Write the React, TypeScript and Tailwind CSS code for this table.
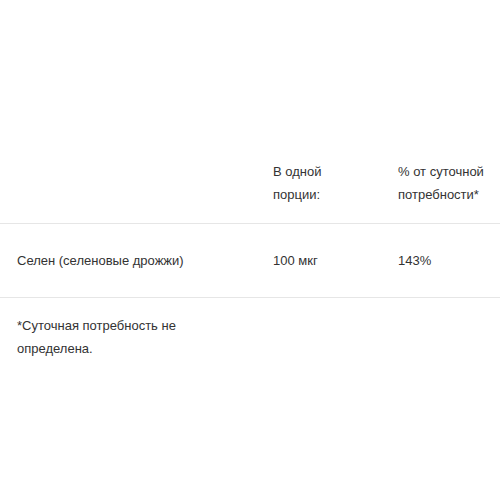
export default function App() {
  return (
    <div
      className="w-[500px] h-[500px] bg-white text-[13px] leading-[23px] text-[#333]"
      style={{ fontFamily: '"Liberation Sans", Arial, sans-serif' }}
    >
      <div className="pt-[143px]">
        {/* header */}
        <div className="grid grid-cols-[273px_125px_1fr] pt-[17px] pb-[17px] border-b border-[#e6e6e6]">
          <div className="pl-[17px]"></div>
          <div>
            В одной
            <br />
            порции:
          </div>
          <div>
            % от суточной
            <br />
            потребности*
          </div>
        </div>

        {/* row */}
        <div className="grid grid-cols-[273px_125px_1fr] py-[25px] border-b border-[#e6e6e6]">
          <div className="pl-[17px]">Селен (селеновые дрожжи)</div>
          <div>100 мкг</div>
          <div>143%</div>
        </div>

        {/* footnote */}
        <div className="pt-[16px] pl-[17px]">
          <div className="w-[230px]">*Суточная потребность не определена.</div>
        </div>
      </div>
    </div>
  );
}
